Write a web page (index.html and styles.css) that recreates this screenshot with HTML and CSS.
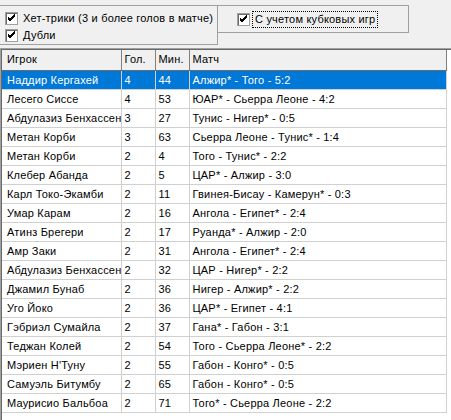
FILE: index.html
```html
<!DOCTYPE html>
<html>
<head>
<meta charset="utf-8">
<link rel="stylesheet" href="styles.css">
</head>
<body>
<div class="top">
  <div class="grp grp-left">
    <div class="chk-row">
      <span class="chk"><svg width="11" height="11" viewBox="0 0 11 11"><path d="M2 5 L4 7 L9 2 M2 6 L4 8 L9 3 M2 4 L4 6 L9 1" stroke="#000" stroke-width="1" fill="none"/></svg></span>
      <span class="lbl">Хет-трики (3 и более голов в матче)</span>
    </div>
    <div class="chk-row">
      <span class="chk"><svg width="11" height="11" viewBox="0 0 11 11"><path d="M2 5 L4 7 L9 2 M2 6 L4 8 L9 3 M2 4 L4 6 L9 1" stroke="#000" stroke-width="1" fill="none"/></svg></span>
      <span class="lbl">Дубли</span>
    </div>
  </div>
  <div class="grp grp-right">
    <div class="chk-row">
      <span class="chk"><svg width="11" height="11" viewBox="0 0 11 11"><path d="M2 5 L4 7 L9 2 M2 6 L4 8 L9 3 M2 4 L4 6 L9 1" stroke="#000" stroke-width="1" fill="none"/></svg></span>
      <span class="lbl focus">С учетом кубковых игр</span>
    </div>
  </div>
</div>
<div class="lv">
  <div class="lv-in">
    <table class="grid">
      <colgroup><col class="c1"><col class="c2"><col class="c3"><col class="c4"></colgroup>
      <thead>
        <tr><th>Игрок</th><th>Гол.</th><th>Мин.</th><th>Матч</th></tr>
      </thead>
      <tbody>
        <tr class="sel"><td>Наддир Кергахей</td><td>4</td><td>44</td><td>Алжир* - Того - 5:2</td></tr>
        <tr><td>Лесего Сиссе</td><td>4</td><td>53</td><td>ЮАР* - Сьерра Леоне - 4:2</td></tr>
        <tr><td>Абдулазиз Бенхассен</td><td>3</td><td>27</td><td>Тунис - Нигер* - 0:5</td></tr>
        <tr><td>Метан Корби</td><td>3</td><td>63</td><td>Сьерра Леоне - Тунис* - 1:4</td></tr>
        <tr><td>Метан Корби</td><td>2</td><td>4</td><td>Того - Тунис* - 2:2</td></tr>
        <tr><td>Клебер Абанда</td><td>2</td><td>5</td><td>ЦАР* - Алжир - 3:0</td></tr>
        <tr><td>Карл Токо-Экамби</td><td>2</td><td>11</td><td>Гвинея-Бисау - Камерун* - 0:3</td></tr>
        <tr><td>Умар Карам</td><td>2</td><td>16</td><td>Ангола - Египет* - 2:4</td></tr>
        <tr><td>Атинз Брегери</td><td>2</td><td>17</td><td>Руанда* - Алжир - 2:0</td></tr>
        <tr><td>Амр Заки</td><td>2</td><td>31</td><td>Ангола - Египет* - 2:4</td></tr>
        <tr><td>Абдулазиз Бенхассен</td><td>2</td><td>32</td><td>ЦАР - Нигер* - 2:2</td></tr>
        <tr><td>Джамил Бунаб</td><td>2</td><td>36</td><td>Нигер - Алжир* - 2:2</td></tr>
        <tr><td>Уго Йоко</td><td>2</td><td>36</td><td>ЦАР* - Египет - 4:1</td></tr>
        <tr><td>Гэбриэл Сумайла</td><td>2</td><td>37</td><td>Гана* - Габон - 3:1</td></tr>
        <tr><td>Теджан Колей</td><td>2</td><td>54</td><td>Того - Сьерра Леоне* - 2:2</td></tr>
        <tr><td>Мэриен Н'Туну</td><td>2</td><td>55</td><td>Габон - Конго* - 0:5</td></tr>
        <tr><td>Самуэль Битумбу</td><td>2</td><td>65</td><td>Габон - Конго* - 0:5</td></tr>
        <tr><td>Маурисио Бальбоа</td><td>2</td><td>71</td><td>Того* - Сьерра Леоне - 2:2</td></tr>
      </tbody>
    </table>
  </div>
</div>
</body>
</html>
```
FILE: styles.css
```css
html, body {
  margin: 0;
  padding: 0;
  background: #f0f0f0;
  overflow: hidden;
}
body {
  width: 451px;
  height: 420px;
  font-family: "Liberation Sans", Arial, sans-serif;
  font-size: 11px;
  letter-spacing: 0.2px;
  color: #000;
}
.top {
  display: flex;
  align-items: flex-start;
  height: 48px;
}
.grp {
  box-sizing: border-box;
  margin-top: 5px;
  border: 1px solid #a0a0a0;
}
.grp-left {
  width: 218px;
  height: 40px;
  border-left: none;
  padding: 6px 0 0 5px;
  display: flex;
  flex-direction: column;
  gap: 4px;
}
.grp-right {
  width: 192px;
  height: 28px;
  margin-left: -1px;
  padding: 7px 0 0 19px;
}
.chk-row {
  display: flex;
  align-items: center;
  height: 13px;
}
.chk {
  box-sizing: border-box;
  width: 13px;
  height: 13px;
  background: #fff;
  border: 1px solid #a0a0a0;
  box-shadow: inset 1px 1px 0 #696969;
  display: flex;
  align-items: center;
  justify-content: center;
}
.chk svg {
  display: block;
}
.lbl {
  margin-left: 5px;
  white-space: nowrap;
  line-height: 13px;
}
.grp-right .lbl {
  margin-left: 4px;
}
.focus {
  outline: 1px dotted #000;
  outline-offset: 1px;
  padding: 0 1px;
}
.lv {
  border-top: 1px solid #a0a0a0;
  border-left: 1px solid #a0a0a0;
  height: 371px;
  width: 470px;
}
.lv-in {
  border-top: 1px solid #696969;
  border-left: 1px solid #696969;
  background: #fff;
  height: 100%;
}
.grid {
  border-collapse: collapse;
  table-layout: fixed;
  width: 444px;
}
.c1 { width: 119px; }
.c2 { width: 34px; }
.c3 { width: 34px; }
.c4 { width: 257px; }
.grid th, .grid td {
  box-sizing: border-box;
  padding: 0 0 0 3px;
  text-align: left;
  font-weight: normal;
  white-space: nowrap;
  overflow: hidden;
}
.grid th {
  height: 20px;
  line-height: 19px;
  background: #f0f0f0;
  border-right: 1px solid #808080;
  border-bottom: 1px solid #696969;
}
.grid td {
  height: 19px;
  line-height: 18px;
  border-right: 1px solid #d0d0d0;
  border-bottom: 1px solid #d0d0d0;
}
.grid th:first-child, .grid td:first-child {
  padding-left: 5px;
}
.sel td {
  background: #0078d7;
  color: #fff;
}
```
